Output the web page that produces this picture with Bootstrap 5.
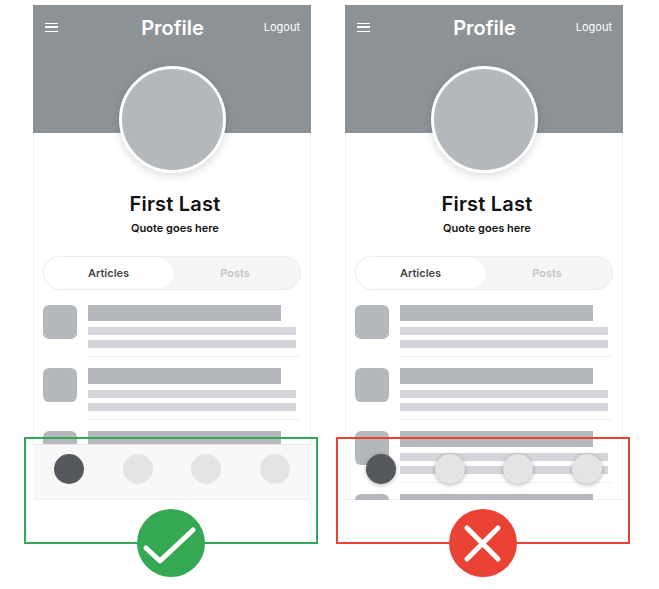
<!DOCTYPE html>
<html lang="en">
<head>
    <meta charset="UTF-8" />
    <title>Profile - do and don't</title>
    <meta name="viewport" content="width=device-width, initial-scale=1" />
    <link href="https://cdn.jsdelivr.net/npm/bootstrap@5.3.0/dist/css/bootstrap.min.css" rel="stylesheet" />
    <style>
        body { background-color: #fff; font-family: Inter, "Liberation Sans", sans-serif; min-height: 100vh; }
        .compare { gap: 34px; padding: 5px 0 0 33px; min-height: 100vh; }
        .mock-wrap { width: 278px; }
        .mock-phone { height: 495px; overflow: hidden; box-shadow: inset 1px 0 #f1f1f3, inset -1px 0 #f1f1f3, inset 0 -1px #f1f1f3; }
        .mock-head { height: 128px; padding: 10px 11px 0 12px; background-color: #8d9297; color: #fff; }
        .mock-head-side { flex: 1 1 0; }
        .mock-burger { width: 13px; height: 9px; margin-top: 8px; border-top: 1.5px solid #fff; border-bottom: 1.5px solid #fff; position: relative; }
        .mock-burger::after { content: ""; position: absolute; left: 0; right: 0; top: 2.25px; height: 1.5px; background-color: #fff; }
        .mock-title { font-size: 20px; font-weight: 600; line-height: 27px; }
        .mock-logout { font-size: 11px; line-height: 27px; margin-top: -1px; }
        .mock-avatar { width: 107px; height: 107px; margin: -67px auto 0; background-color: #b4b7bb; border: 3px solid #fff; box-shadow: 0 3px 10px rgba(0, 0, 0, .14); position: relative; }
        .mock-name { font-size: 20px; font-weight: 600; line-height: 28px; letter-spacing: .2px; margin: 17px 0 0; color: #111; padding-left: 6px; }
        .mock-quote { font-size: 11px; font-weight: 600; line-height: 16px; margin: 2px 0 0; color: #111; padding-left: 6px; }
        .mock-tabs { height: 34px; margin: 20px 10px 15px; background-color: #f5f5f5; border: 1px solid #ececec; border-radius: 17px; font-size: 11px; font-weight: 600; }
        .mock-tab { width: 124px; border-radius: 16px; color: #c4c4c4; }
        .mock-tab-on { width: 129px; background-color: #fff; color: #444; }
        .mock-item { height: 63px; padding-left: 10px; gap: 11px; }
        .mock-thumb { width: 34px; height: 34px; border-radius: 6px; background-color: #b4b7bb; }
        .mock-lines { width: 212px; }
        .mock-bar { width: 193px; height: 16px; background-color: #b4b7bb; }
        .mock-line { width: 208px; height: 8px; margin-top: 5px; background-color: #d5d6db; }
        .mock-line-first { margin-top: 6px; }
        .mock-rule { height: 1px; margin-top: 8px; background-color: #f1f1f3; }
        .mock-nav { position: absolute; left: 0; right: 0; top: 439px; height: 56px; padding: 9px 21px 0; }
        .mock-nav-solid { background-color: #f8f8f8; border-top: 1px solid #e6e6e8; box-shadow: inset 0 -1px #f1f1f3; }
        .mock-dot { width: 30px; height: 30px; background-color: #e4e4e4; }
        .mock-dot-on { background-color: #55585d; }
        .mock-nav-float { padding-top: 10px; }
        .mock-nav-float .mock-dot { box-shadow: 0 1px 4px rgba(0, 0, 0, .3); }
        .verdict-frame { position: absolute; left: -9px; top: 432px; width: 294px; height: 107px; border: 2px solid; }
        .verdict-good { border-color: #34a853; }
        .verdict-bad { border-color: #ea4335; }
        .verdict-badge { position: absolute; left: 50%; bottom: -35px; width: 68px; height: 68px; margin-left: -34px; }
        .verdict-good .verdict-badge { background-color: #34a853; }
        .verdict-bad .verdict-badge { background-color: #ea4335; }
    </style>
</head>
<body>

    <div class="compare d-flex align-items-start">

        <!-- do -->
        <div class="mock-wrap position-relative">
            <div class="mock-phone position-relative">
                <div class="mock-head d-flex align-items-start">
                    <div class="mock-head-side"><div class="mock-burger"></div></div>
                    <div class="mock-title">Profile</div>
                    <div class="mock-head-side mock-logout text-end">Logout</div>
                </div>
                <div class="mock-avatar rounded-circle"></div>
                <p class="mock-name text-center">First Last</p>
                <p class="mock-quote text-center">Quote goes here</p>
                <div class="mock-tabs d-flex">
                    <div class="mock-tab mock-tab-on d-flex align-items-center justify-content-center">Articles</div>
                    <div class="mock-tab d-flex align-items-center justify-content-center">Posts</div>
                </div>
                <div class="mock-item d-flex">
                    <div class="mock-thumb"></div>
                    <div class="mock-lines"><div class="mock-bar"></div><div class="mock-line mock-line-first"></div><div class="mock-line"></div><div class="mock-rule"></div></div>
                </div>
                <div class="mock-item d-flex">
                    <div class="mock-thumb"></div>
                    <div class="mock-lines"><div class="mock-bar"></div><div class="mock-line mock-line-first"></div><div class="mock-line"></div><div class="mock-rule"></div></div>
                </div>
                <div class="mock-item d-flex">
                    <div class="mock-thumb"></div>
                    <div class="mock-lines"><div class="mock-bar"></div><div class="mock-line mock-line-first"></div><div class="mock-line"></div><div class="mock-rule"></div></div>
                </div>
                <div class="mock-nav mock-nav-solid d-flex justify-content-between">
                    <div class="mock-dot mock-dot-on rounded-circle"></div>
                    <div class="mock-dot rounded-circle"></div>
                    <div class="mock-dot rounded-circle"></div>
                    <div class="mock-dot rounded-circle"></div>
                </div>
            </div>
            <div class="verdict-frame verdict-good">
                <div class="verdict-badge rounded-circle">
                    <svg width="68" height="68" viewBox="0 0 68 68" fill="none" stroke="#fff" stroke-width="5" stroke-linecap="round" stroke-linejoin="round"><path d="M9 39 23 52 56 21"/></svg>
                </div>
            </div>
        </div>

        <!-- don't -->
        <div class="mock-wrap position-relative">
            <div class="mock-phone position-relative">
                <div class="mock-head d-flex align-items-start">
                    <div class="mock-head-side"><div class="mock-burger"></div></div>
                    <div class="mock-title">Profile</div>
                    <div class="mock-head-side mock-logout text-end">Logout</div>
                </div>
                <div class="mock-avatar rounded-circle"></div>
                <p class="mock-name text-center">First Last</p>
                <p class="mock-quote text-center">Quote goes here</p>
                <div class="mock-tabs d-flex">
                    <div class="mock-tab mock-tab-on d-flex align-items-center justify-content-center">Articles</div>
                    <div class="mock-tab d-flex align-items-center justify-content-center">Posts</div>
                </div>
                <div class="mock-item d-flex">
                    <div class="mock-thumb"></div>
                    <div class="mock-lines"><div class="mock-bar"></div><div class="mock-line mock-line-first"></div><div class="mock-line"></div><div class="mock-rule"></div></div>
                </div>
                <div class="mock-item d-flex">
                    <div class="mock-thumb"></div>
                    <div class="mock-lines"><div class="mock-bar"></div><div class="mock-line mock-line-first"></div><div class="mock-line"></div><div class="mock-rule"></div></div>
                </div>
                <div class="mock-item d-flex">
                    <div class="mock-thumb"></div>
                    <div class="mock-lines"><div class="mock-bar"></div><div class="mock-line mock-line-first"></div><div class="mock-line"></div><div class="mock-rule"></div></div>
                </div>
                <div class="mock-item d-flex">
                    <div class="mock-thumb"></div>
                    <div class="mock-lines"><div class="mock-bar"></div></div>
                </div>
                <div class="mock-nav mock-nav-float d-flex justify-content-between">
                    <div class="mock-dot mock-dot-on rounded-circle"></div>
                    <div class="mock-dot rounded-circle"></div>
                    <div class="mock-dot rounded-circle"></div>
                    <div class="mock-dot rounded-circle"></div>
                </div>
            </div>
            <div class="verdict-frame verdict-bad">
                <div class="verdict-badge rounded-circle">
                    <svg width="68" height="68" viewBox="0 0 68 68" fill="none" stroke="#fff" stroke-width="5" stroke-linecap="round"><path d="M18 19 49 50M49 19 18 50"/></svg>
                </div>
            </div>
        </div>

    </div>

    <script src="https://cdn.jsdelivr.net/npm/bootstrap@5.3.0/dist/js/bootstrap.bundle.min.js"></script>
</body>
</html>
